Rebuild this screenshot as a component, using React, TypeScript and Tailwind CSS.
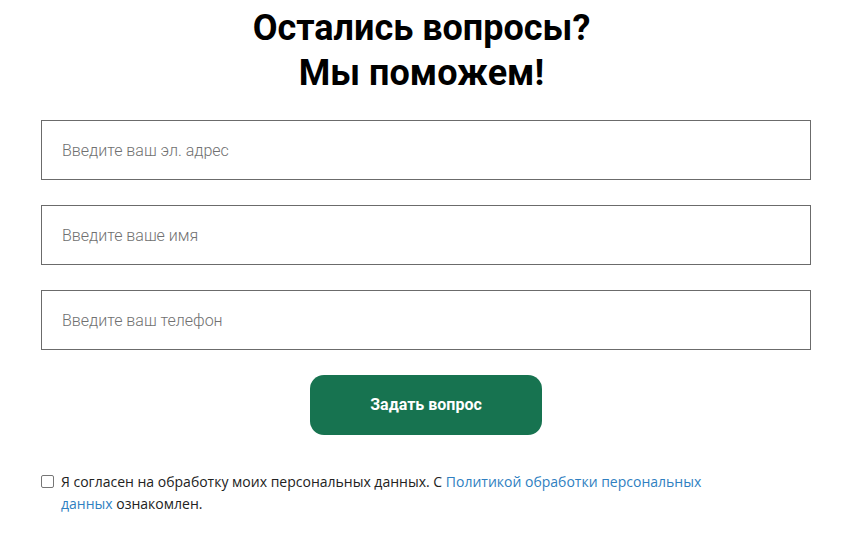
import React from 'react';

const fields = ['Введите ваш эл. адрес', 'Введите ваше имя', 'Введите ваш телефон'];

const App: React.FC = () => {
  return (
    <div className="min-h-screen bg-white px-[41px] pt-[6px]" style={{ fontFamily: 'Roboto, sans-serif' }}>
      <h2 className="pr-[7px] text-center text-[36px] font-bold leading-[45px] text-black">
        Остались вопросы?
        <br />
        Мы поможем!
      </h2>

      <form className="mt-[24px] flex w-[770px] flex-col gap-[25px]">
        {fields.map((f) => (
          <input
            key={f}
            type="text"
            placeholder={f}
            className="h-[60px] w-full border border-[#6b6b6b] bg-white px-[20px] text-[16px] font-light text-gray-800 outline-none placeholder:text-[#707070]"
          />
        ))}
        <div className="flex justify-center">
          <button
            type="button"
            className="h-[60px] w-[232px] rounded-[14px] bg-[#177350] text-[16px] font-bold text-white"
          >
            Задать вопрос
          </button>
        </div>
      </form>

      <label
        className="mt-[36px] flex w-[680px] items-start gap-[7px] text-[14px] leading-[22px] text-[#222]"
        style={{ fontFamily: '"Open Sans", sans-serif' }}
      >
        <input
          type="checkbox"
          className="mt-[4px] h-[13px] w-[13px] shrink-0 appearance-none rounded-[2px] border border-[#767676] bg-white"
        />
        <span>
          Я согласен на обработку моих персональных данных. С{' '}
          <a href="#" className="text-[#2f7fc1]">
            Политикой обработки персональных данных
          </a>{' '}
          ознакомлен.
        </span>
      </label>
    </div>
  );
};

export default App;
